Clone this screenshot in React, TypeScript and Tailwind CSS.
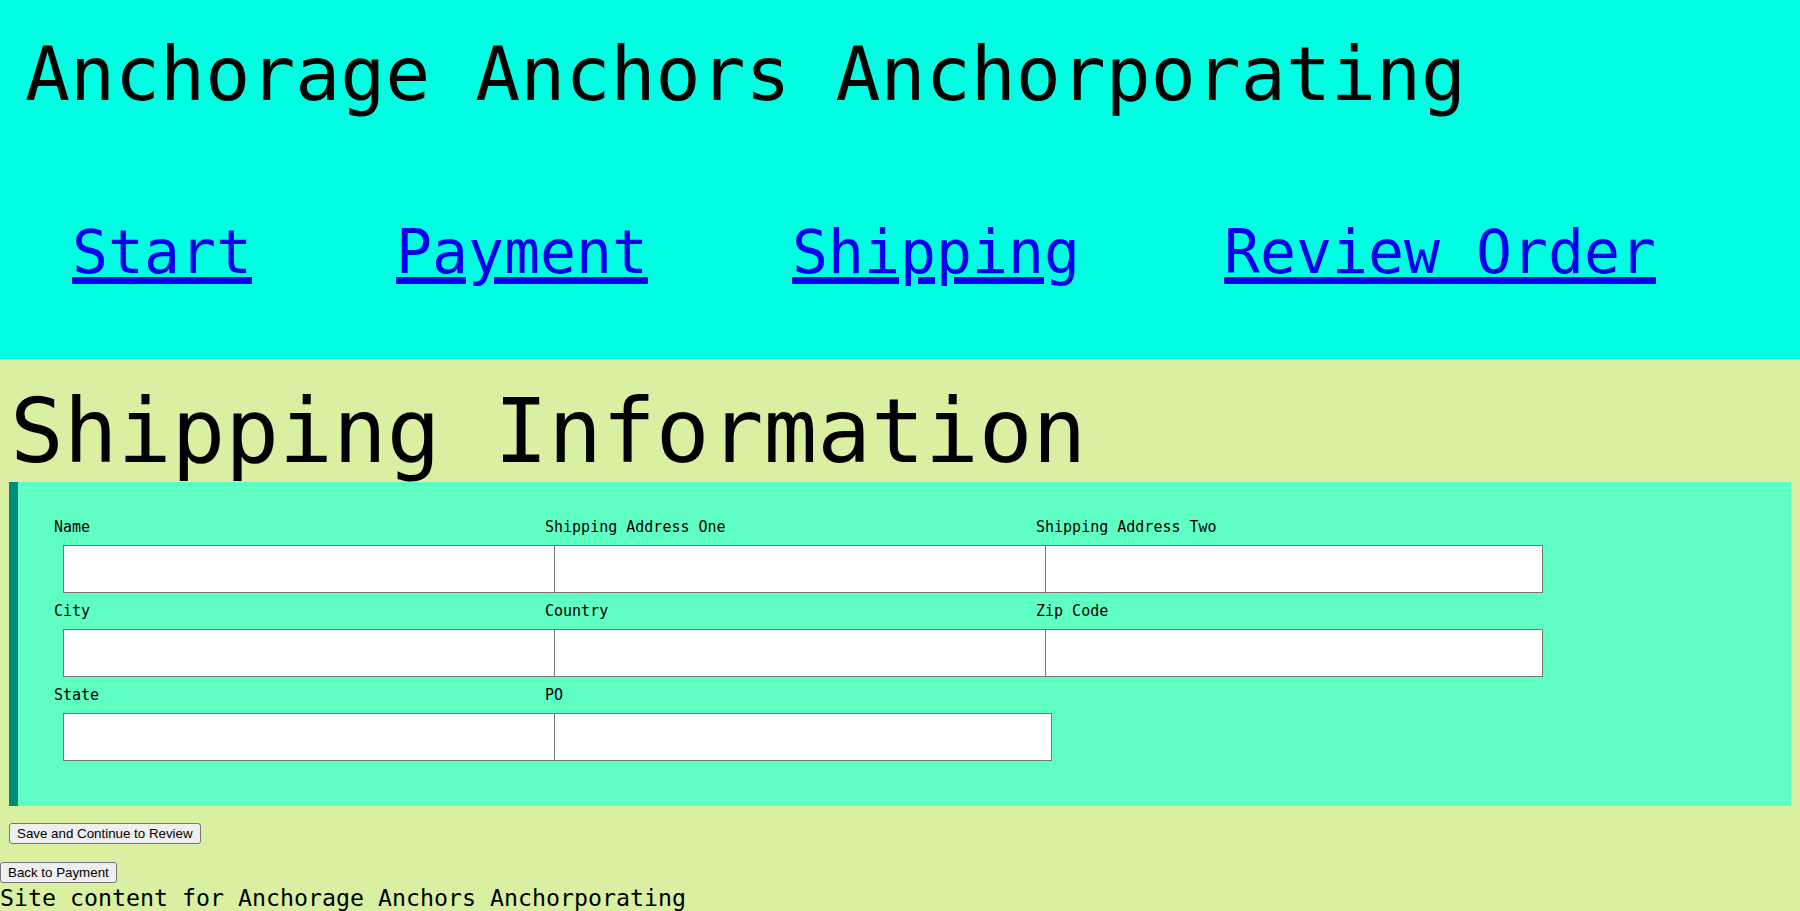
import React from "react";

const navLinks = ["Start", "Payment", "Shipping", "Review Order"];

// rows of the shipping form, three fields to a row
const fields = [
  "Name",
  "Shipping Address One",
  "Shipping Address Two",
  "City",
  "Country",
  "Zip Code",
  "State",
  "PO",
];

const mono = "font-['DejaVu_Sans_Mono',monospace]";

const App = () => {
  return (
    <div className={`min-h-screen bg-[#d9f0a3] text-black ${mono}`}>
      <header className="bg-[#00ffe2] pt-[37px] pb-[77px]">
        <h1 className="pl-[25px] text-[74.8px] leading-[75px] font-normal">
          Anchorage Anchors Anchorporating
        </h1>
        <nav className="mt-[110px]">
          <ul className="flex gap-[144px] pl-[72px] text-[59.8px] leading-[60px]">
            {navLinks.map((link) => (
              <li key={link}>
                <a
                  href="#"
                  className="text-[#0000ee] underline decoration-[7px] underline-offset-[4px] whitespace-pre"
                >
                  {link}
                </a>
              </li>
            ))}
          </ul>
        </nav>
      </header>

      <main>
        <h2 className="pl-[10px] pt-[28px] text-[89.4px] leading-[89.4px] font-normal">
          Shipping Information
        </h2>
        <form
          className="mx-[9px] mt-[6px] border-l-[9px] border-[#008a78] bg-[#5fffc3] pl-[36px] pt-[27px] pb-[45px]"
          onSubmit={(e) => e.preventDefault()}
        >
          <div className="grid grid-cols-[491px_491px_491px]">
            {fields.map((label) => (
              <div key={label} className="flex flex-col">
                <label className="text-[15px] leading-[36px] whitespace-pre">{label}</label>
                <input
                  type="text"
                  className="ml-[9px] h-[48px] w-[498px] border border-[#767676] bg-white"
                />
              </div>
            ))}
          </div>
        </form>
        <div className="font-['Liberation_Sans',Arial,sans-serif] text-[13.33px]">
          <button className="ml-[9px] mt-[17px] block rounded-[3px] border border-[#767676] bg-[#efefef] px-[7px] py-[2px] leading-[15px]">
            Save and Continue to Review
          </button>
          <button className="mt-[18px] block rounded-[3px] border border-[#767676] bg-[#efefef] px-[7px] py-[2px] leading-[15px]">
            Back to Payment
          </button>
        </div>
        <p className="mt-[3px] text-[23.25px] leading-[24px]">
          Site content for Anchorage Anchors Anchorporating
        </p>
      </main>
    </div>
  );
};

export default App;
